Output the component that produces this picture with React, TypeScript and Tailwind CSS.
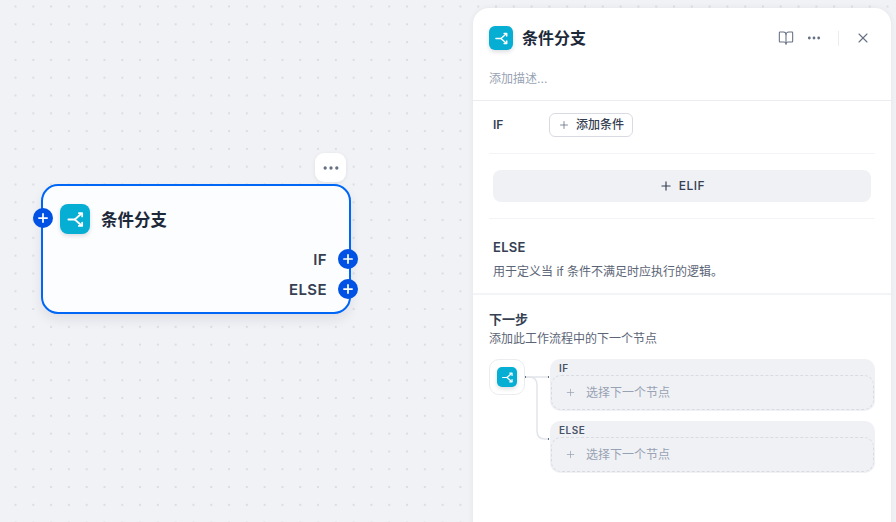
import { Plus, X, BookOpen, Ellipsis } from "lucide-react";

const FONT = "[font-family:Inter,'Noto_Sans_CJK_SC',sans-serif]";

function BranchIcon({ size }: { size: number }) {
  return (
    <svg width={size} height={size} viewBox="0 0 16 16" fill="none" stroke="#fff" strokeWidth="1.5" strokeLinecap="round" strokeLinejoin="round">
      <path d="M2 8h5.4L12.6 3.4" />
      <path d="M7.4 8l5.2 4.6" />
      <path d="M10.8 2.6h2.8v2.8" />
      <path d="M10.8 13.4h2.8v-2.8" />
    </svg>
  );
}

function NodeIcon({ className, size }: { className: string; size: number }) {
  return (
    <div className={`flex items-center justify-center bg-[#06aed4] shadow-[0_2px_4px_rgba(16,24,40,0.14)] ${className}`}>
      <BranchIcon size={size} />
    </div>
  );
}

function Handle({ className }: { className: string }) {
  return (
    <div className={`absolute flex h-5 w-5 items-center justify-center rounded-full bg-[#0052e5] ${className}`}>
      <Plus size={14} strokeWidth={3} className="text-white" />
    </div>
  );
}

function BranchCard({ label }: { label: string }) {
  return (
    <div className="h-[52px] rounded-[10px] bg-[#f0f1f5] pt-[3px]">
      <div className="pl-[9px] text-[10px] leading-[13px] font-semibold tracking-[0.5px] text-[#475467]">{label}</div>
      <div className="mx-px flex h-[35px] items-center rounded-[10px] border border-dashed border-[#d8dbe2] pl-[13px] text-xs text-[#98a2b3]">
        <Plus size={11} strokeWidth={1.6} className="mr-[10px]" />
        选择下一个节点
      </div>
    </div>
  );
}

export default function App() {
  return (
    <div className={`flex h-[522px] w-[896px] overflow-hidden bg-[#f1f2f6] bg-[radial-gradient(circle,#dcdde2_1.1px,transparent_1.3px)] bg-[size:17.8px_17.8px] bg-[position:6.6px_-2.4px] ${FONT}`}>
      {/* canvas */}
      <div className="relative w-[473px] shrink-0">
        <div className="absolute top-[153px] left-[315px] flex h-[29px] w-[31px] items-center justify-center rounded-[9px] bg-white shadow-[0_1px_4px_rgba(16,24,40,0.08)]">
          <Ellipsis size={20} strokeWidth={2} className="text-[#667085]" />
        </div>
        <div className="absolute top-[184px] left-[41px] h-[130px] w-[310px] rounded-[17px] border-2 border-[#0066f5] bg-[#fcfdff] shadow-[0_6px_12px_rgba(16,24,40,0.08)]">
          <div className="flex items-center gap-[11px] pt-[17px] pl-[17px]">
            <NodeIcon className="h-[30px] w-[30px] rounded-lg" size={19} />
            <span className="pt-[2px] text-[16.5px] leading-[30px] font-semibold text-[#1d2939]">条件分支</span>
          </div>
          <div className="mt-[10px] pr-[22px] text-right text-[15px] leading-[30px] font-semibold tracking-[0.4px] text-[#354052]">
            <div>IF</div>
            <div>ELSE</div>
          </div>
        </div>
        <Handle className="top-[208px] left-[33px]" />
        <Handle className="top-[249px] left-[338px]" />
        <Handle className="top-[279px] left-[338px]" />
      </div>

      {/* panel */}
      <div className="mt-2 mb-[-20px] flex w-[418px] shrink-0 flex-col rounded-t-2xl bg-white shadow-[0_0_6px_rgba(16,24,40,0.06)]">
        <div className="flex h-[60px] items-center pr-5 pl-4">
          <NodeIcon className="h-6 w-6 rounded-md" size={15} />
          <span className="ml-[9px] text-base font-semibold text-[#1d2939]">条件分支</span>
          <div className="ml-auto flex items-center text-[#667085]">
            <BookOpen size={16} strokeWidth={1.6} />
            <Ellipsis size={16} strokeWidth={2.2} className="ml-3" />
            <div className="mx-4 h-[15px] w-px bg-[#eaecf0]" />
            <X size={16} strokeWidth={1.6} />
          </div>
        </div>
        <div className="h-8 px-4 pt-[1px] text-xs leading-5 text-[#98a2b3]">添加描述...</div>
        <div className="border-t border-[#eaecf0] px-4">
          <div className="flex h-[53px] items-start border-b border-[#f2f4f7] pt-3 pl-1">
            <span className="w-14 text-xs leading-6 font-semibold text-[#354052]">IF</span>
            <div className="flex h-6 w-[84px] items-center justify-center gap-[6px] rounded-md border border-[#d8dbe2] text-xs font-medium text-[#354052]">
              <Plus size={12} strokeWidth={1.6} className="text-[#667085]" />
              添加条件
            </div>
          </div>
          <div className="flex h-[65px] items-center border-b border-[#f2f4f7] px-1">
            <div className="flex h-8 w-full items-center justify-center gap-[6px] rounded-lg bg-[#f0f1f5] text-xs font-medium tracking-[0.5px] text-[#354052]">
              <Plus size={14} strokeWidth={2} />
              ELIF
            </div>
          </div>
          <div className="h-[74px] px-1 pt-[18px]">
            <div className="text-[13px] leading-5 font-semibold tracking-[0.3px] text-[#354052]">ELSE</div>
            <div className="mt-[5px] text-xs leading-5 text-[#5b6576]">用于定义当 if 条件不满足时应执行的逻辑。</div>
          </div>
        </div>
        <div className="border-t-2 border-[#f2f4f7] px-4 pt-[15px]">
          <div className="text-[13px] leading-[18px] font-semibold text-[#354052]">下一步</div>
          <div className="mt-[2px] text-xs leading-[18px] text-[#5b6576]">添加此工作流程中的下一个节点</div>
          <div className="relative mt-[11px] flex">
            <div className="flex h-9 w-9 shrink-0 items-center justify-center rounded-[10px] border border-[#eaecf0] bg-white">
              <NodeIcon className="h-5 w-5 rounded-[5px]" size={13} />
            </div>
            <svg width="25" height="84" viewBox="0 0 25 84" fill="none" className="shrink-0">
              <path d="M0 18h24" stroke="#e2e5ea" strokeWidth="1.5" />
              <path d="M0 18h4c5 0 8 3 8 8v46c0 5 3 8 8 8h4" stroke="#e2e5ea" strokeWidth="1.5" />
              <path d="M0 17h1v2H0zM23 17h1v2h-1zM23 79h1v2h-1z" fill="#667085" />
            </svg>
            <div className="flex w-[325px] flex-col gap-[10px]">
              <BranchCard label="IF" />
              <BranchCard label="ELSE" />
            </div>
          </div>
        </div>
      </div>
    </div>
  );
}
